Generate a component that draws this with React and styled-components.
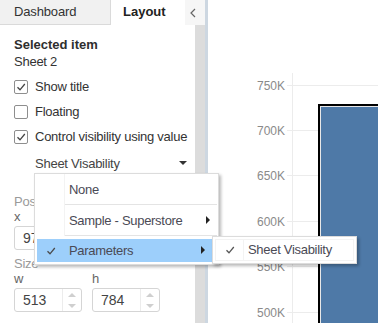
import React from "react";
import styled, { createGlobalStyle } from "styled-components";

const GlobalStyle = createGlobalStyle`
  html, body {
    margin: 0;
    padding: 0;
    background: #ffffff;
    overflow: hidden;
  }
  body {
    font-family: "Liberation Sans", Arial, sans-serif;
    color: #333333;
  }
`;

const TICKS = ["750K", "700K", "650K", "600K", "550K", "500K"];
const TICK_Y = [85, 130, 175, 221, 266, 312];

function Check({ color = "#444", size = 10 }) {
  return (
    <svg width={size} height={size} viewBox="0 0 10 10">
      <polyline points="1.5,5.2 4,7.8 8.8,2" fill="none" stroke={color} strokeWidth="1.3" />
    </svg>
  );
}

function CheckRow({ checked, label }) {
  return (
    <Row>
      <Box>{checked && <Check />}</Box>
      <span>{label}</span>
    </Row>
  );
}

function NumberField({ label, value }) {
  return (
    <FieldWrap>
      <SmallLabel>{label}</SmallLabel>
      <Field>
        <FieldValue>{value}</FieldValue>
        <Spinner>
          <SpinHalf>
            <Tri $up />
          </SpinHalf>
          <SpinHalf>
            <Tri />
          </SpinHalf>
        </Spinner>
      </Field>
    </FieldWrap>
  );
}

function Chart() {
  return (
    <svg width="170" height="323" viewBox="0 0 170 323">
      <line x1="84.5" y1="73" x2="84.5" y2="323" stroke="#ececec" strokeWidth="1" />
      {TICK_Y.map((y, i) => (
        <g key={TICKS[i]}>
          <line x1="79" y1={y + 0.5} x2="170" y2={y + 0.5} stroke="#ececec" strokeWidth="1" />
          <text
            x="77"
            y={y + 4.5}
            textAnchor="end"
            fontSize="12"
            fill="#8a8a8a"
            fontFamily="Liberation Sans, Arial, sans-serif"
          >
            {TICKS[i]}
          </text>
        </g>
      ))}
      <rect x="110" y="104" width="60" height="219" fill="#000000" />
      <rect x="112" y="106" width="58" height="217" fill="#e8e8e8" />
      <rect x="113" y="107" width="57" height="216" fill="#4e79a7" />
    </svg>
  );
}

export default function App() {
  return (
    <>
      <GlobalStyle />
      <Frame>
        <LeftPanel>
          <Tabs>
            <Tab>Dashboard</Tab>
            <Tab $active>Layout</Tab>
            <Collapse>
              <svg width="6" height="10" viewBox="0 0 6 10">
                <polyline points="5,1 1,5 5,9" fill="none" stroke="#666" strokeWidth="1.2" />
              </svg>
            </Collapse>
          </Tabs>
          <Body>
            <Content>
              <Title>Selected item</Title>
              <Subtitle>Sheet 2</Subtitle>
              <CheckList>
                <CheckRow checked label="Show title" />
                <CheckRow label="Floating" />
                <CheckRow checked label="Control visibility using value" />
              </CheckList>
              <Select>
                <span>Sheet Visability</span>
                <Caret />
              </Select>
              <GroupLabel>Position</GroupLabel>
              <Pair>
                <NumberField label="x" value="97" />
              </Pair>
              <GroupLabel $tight>Size</GroupLabel>
              <Pair>
                <NumberField label="w" value="513" />
                <NumberField label="h" value="784" />
              </Pair>
            </Content>
            <Scroll />
          </Body>
        </LeftPanel>
        <ChartArea>
          <Chart />
        </ChartArea>

        <Menu>
          <MenuItem>
            <CheckCell />
            <MenuLabel>None</MenuLabel>
          </MenuItem>
          <MenuItem>
            <CheckCell />
            <MenuLabel>
              Sample - Superstore
              <Arrow />
            </MenuLabel>
          </MenuItem>
          <MenuItem $selected>
            <CheckCell $plain>
              <Check color="#4a4a4a" size={10} />
            </CheckCell>
            <MenuLabel $plain>
              Parameters
              <Arrow />
            </MenuLabel>
          </MenuItem>
        </Menu>

        <SubMenu>
          <SubItem>
            <CheckCell>
              <Check color="#555" size={10} />
            </CheckCell>
            <MenuLabel $plain>Sheet Visability</MenuLabel>
          </SubItem>
        </SubMenu>
      </Frame>
    </>
  );
}

const Frame = styled.div`
  position: relative;
  display: flex;
  width: 378px;
  height: 323px;
  overflow: hidden;
`;

const LeftPanel = styled.aside`
  width: 205px;
  flex-shrink: 0;
  display: flex;
  flex-direction: column;
  border-right: 3px solid #cdd7e1;
  background: #ffffff;
`;

const Tabs = styled.div`
  display: flex;
  height: 25px;
  flex-shrink: 0;
`;

const Tab = styled.div`
  box-sizing: border-box;
  width: ${(p) => (p.$active ? "74px" : "111px")};
  padding-left: ${(p) => (p.$active ? "12px" : "14px")};
  font-size: 13px;
  line-height: 24px;
  letter-spacing: ${(p) => (p.$active ? "0" : "-0.15px")};
  font-weight: ${(p) => (p.$active ? 700 : 400)};
  color: ${(p) => (p.$active ? "#222" : "#333")};
  background: ${(p) => (p.$active ? "#ffffff" : "#f1f1f1")};
  border-right: ${(p) => (p.$active ? "none" : "1px solid #dadada")};
  border-bottom: ${(p) => (p.$active ? "none" : "1px solid #dadada")};
`;

const Collapse = styled.div`
  width: 20px;
  display: flex;
  align-items: center;
  justify-content: center;
  padding-right: 4px;
  box-sizing: border-box;
  background: #f6f6f6;
`;

const Body = styled.div`
  flex: 1;
  display: flex;
  min-height: 0;
`;

const Content = styled.div`
  flex: 1;
  padding: 11px 0 0 14px;
  font-size: 13px;
  letter-spacing: -0.25px;
`;

const Scroll = styled.div`
  width: 10px;
  background: #dcdcdc;
`;

const Title = styled.div`
  font-weight: 700;
  line-height: 17px;
  letter-spacing: 0;
  color: #2e2e2e;
`;

const Subtitle = styled.div`
  line-height: 17px;
  color: #333;
`;

const CheckList = styled.div`
  margin-top: 4px;
`;

const Row = styled.div`
  display: flex;
  align-items: center;
  gap: 7px;
  height: 25px;
  color: #333;
`;

const Box = styled.div`
  box-sizing: border-box;
  width: 14px;
  height: 14px;
  border: 1px solid #8e8e8e;
  border-radius: 2px;
  display: flex;
  align-items: center;
  justify-content: center;
  background: #fff;
`;

const Select = styled.div`
  margin-top: 2px;
  height: 24px;
  display: flex;
  align-items: center;
  justify-content: space-between;
  padding: 0 8px 0 21px;
  color: #444;
`;

const Caret = styled.span`
  width: 0;
  height: 0;
  border-left: 4px solid transparent;
  border-right: 4px solid transparent;
  border-top: 4px solid #333;
`;

const GroupLabel = styled.div`
  margin-top: ${(p) => (p.$tight ? "6px" : "19px")};
  line-height: 16px;
  color: #9a9a9a;
`;

const Pair = styled.div`
  display: flex;
  gap: 10px;
`;

const FieldWrap = styled.div`
  display: flex;
  flex-direction: column;
`;

const SmallLabel = styled.div`
  line-height: 14px;
  color: #666;
  margin-bottom: 2px;
`;

const Field = styled.div`
  box-sizing: border-box;
  width: 68px;
  height: 24px;
  display: flex;
  border: 1px solid #d5d5d5;
  border-radius: 3px;
  background: #fff;
`;

const FieldValue = styled.div`
  flex: 1;
  padding-left: 8px;
  font-size: 14px;
  line-height: 22px;
  letter-spacing: 0;
  color: #444;
`;

const Spinner = styled.div`
  width: 18px;
  display: flex;
  flex-direction: column;
  border-left: 1px solid #ececec;
`;

const SpinHalf = styled.div`
  flex: 1;
  display: flex;
  align-items: center;
  justify-content: center;
`;

const Tri = styled.span`
  width: 0;
  height: 0;
  border-left: 4px solid transparent;
  border-right: 4px solid transparent;
  ${(p) => (p.$up ? "border-bottom: 4px solid #cfcfcf;" : "border-top: 4px solid #cfcfcf;")}
`;

const ChartArea = styled.main`
  flex: 1;
  background: #fff;
  overflow: hidden;
`;

const Menu = styled.div`
  position: absolute;
  left: 34px;
  top: 173px;
  width: 185px;
  box-sizing: border-box;
  padding: 0 6px 2px 2px;
  background: #fff;
  border: 1px solid #dcdcdc;
  box-shadow: 2px 2px 3px rgba(0, 0, 0, 0.28);
  font-size: 13px;
  letter-spacing: -0.3px;
  color: #4a4a55;
`;

const MenuItem = styled.div`
  display: flex;
  height: ${(p) => (p.$selected ? "23px" : "31px")};
  margin-top: ${(p) => (p.$selected ? "3px" : "0")};
  background: ${(p) => (p.$selected ? "#9dcffb" : "transparent")};
`;

const CheckCell = styled.div`
  width: 27px;
  display: flex;
  align-items: center;
  justify-content: center;
  border-right: 1px solid ${(p) => (p.$plain ? "transparent" : "#f3f3f3")};
`;

const MenuLabel = styled.div`
  flex: 1;
  display: flex;
  align-items: center;
  justify-content: space-between;
  padding: 0 6px 0 4px;
  margin-right: ${(p) => (p.$plain ? "0" : "-5px")};
  border-bottom: 1px solid ${(p) => (p.$plain ? "transparent" : "#e4e4e4")};
`;

const Arrow = styled.span`
  width: 0;
  height: 0;
  margin-right: 1px;
  border-top: 4px solid transparent;
  border-bottom: 4px solid transparent;
  border-left: 4px solid #222;
`;

const SubMenu = styled.div`
  position: absolute;
  left: 212px;
  top: 236px;
  width: 145px;
  height: 28px;
  box-sizing: border-box;
  padding: 2px;
  background: #fff;
  border: 1px solid #dcdcdc;
  box-shadow: 2px 2px 3px rgba(0, 0, 0, 0.28);
  font-size: 13px;
  letter-spacing: -0.3px;
  color: #4a4a55;
`;

const SubItem = styled.div`
  display: flex;
  height: 100%;
  border: 1px solid #f3f3f3;
  box-sizing: border-box;
`;
